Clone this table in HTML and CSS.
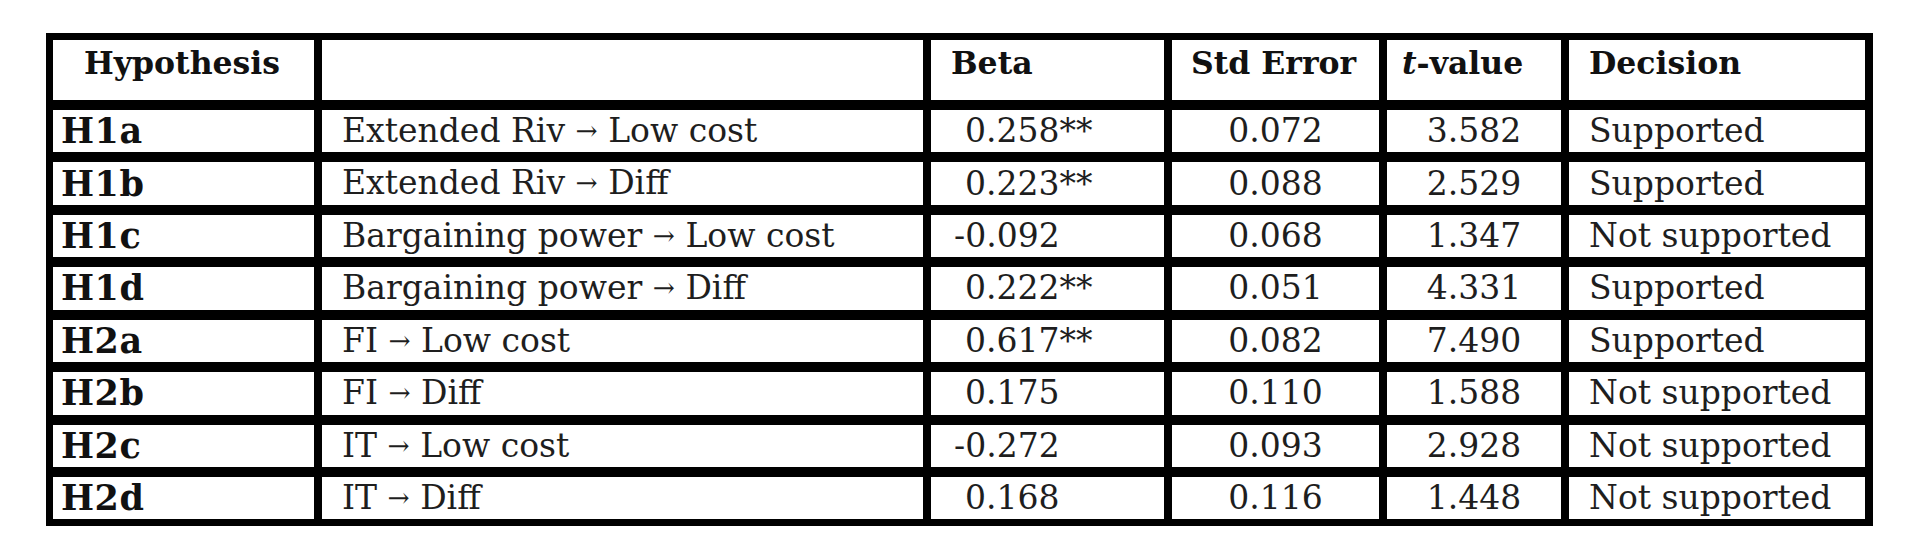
FILE: index.html
```html
<!DOCTYPE html>
<html lang="en">
<head>
<meta charset="utf-8">
<title>Hypothesis testing results</title>
<link rel="stylesheet" href="styles.css">
</head>
<body>
<table class="results">
  <colgroup>
    <col class="c-hyp">
    <col class="c-path">
    <col class="c-beta">
    <col class="c-se">
    <col class="c-t">
    <col class="c-dec">
  </colgroup>
  <thead>
    <tr>
      <th class="hyp-head">Hypothesis</th>
      <th></th>
      <th>Beta</th>
      <th class="se-head">Std Error</th>
      <th class="t-head"><i>t</i>-value</th>
      <th>Decision</th>
    </tr>
  </thead>
  <tbody>
    <tr><td class="hyp">H1a</td><td class="path">Extended Riv <span class="arr">→</span> Low cost</td><td class="beta pos">0.258**</td><td class="num">0.072</td><td class="num">3.582</td><td class="dec">Supported</td></tr>
    <tr><td class="hyp">H1b</td><td class="path">Extended Riv <span class="arr">→</span> Diff</td><td class="beta pos">0.223**</td><td class="num">0.088</td><td class="num">2.529</td><td class="dec">Supported</td></tr>
    <tr><td class="hyp">H1c</td><td class="path">Bargaining power <span class="arr">→</span> Low cost</td><td class="beta">-0.092</td><td class="num">0.068</td><td class="num">1.347</td><td class="dec">Not supported</td></tr>
    <tr><td class="hyp">H1d</td><td class="path">Bargaining power <span class="arr">→</span> Diff</td><td class="beta pos">0.222**</td><td class="num">0.051</td><td class="num">4.331</td><td class="dec">Supported</td></tr>
    <tr><td class="hyp">H2a</td><td class="path">FI <span class="arr">→</span> Low cost</td><td class="beta pos">0.617**</td><td class="num">0.082</td><td class="num">7.490</td><td class="dec">Supported</td></tr>
    <tr><td class="hyp">H2b</td><td class="path">FI <span class="arr">→</span> Diff</td><td class="beta pos">0.175</td><td class="num">0.110</td><td class="num">1.588</td><td class="dec">Not supported</td></tr>
    <tr><td class="hyp">H2c</td><td class="path">IT <span class="arr">→</span> Low cost</td><td class="beta">-0.272</td><td class="num">0.093</td><td class="num">2.928</td><td class="dec">Not supported</td></tr>
    <tr><td class="hyp">H2d</td><td class="path">IT <span class="arr">→</span> Diff</td><td class="beta pos">0.168</td><td class="num">0.116</td><td class="num">1.448</td><td class="dec">Not supported</td></tr>
  </tbody>
</table>
</body>
</html>
```
FILE: styles.css
```css
html, body {
  margin: 0;
  background: #ffffff;
}
body {
  padding: 33px 0 0 46px;
  height: 548px;
  box-sizing: border-box;
  overflow: hidden;
  font-family: "DejaVu Serif", "Liberation Serif", serif;
  font-size: 33px;
  color: #1e1e1e;
}
.results {
  table-layout: fixed;
  border-collapse: separate;
  border-spacing: 0;
  width: 1827px;
  border-style: solid;
  border-color: #000;
  border-width: 7px 8px 7px 7px;
}
.c-hyp { width: 269px; }
.c-path { width: 609px; }
.c-beta { width: 241px; }
.c-se { width: 215px; }
.c-t { width: 182px; }
.c-dec { width: 296px; }

.results th,
.results td {
  border-right: 8px solid #000;
  border-bottom: 10px solid #000;
  padding: 0;
  line-height: 42px;
  white-space: nowrap;
  text-align: left;
}
.results th:last-child,
.results td:last-child {
  border-right: none;
}
.results tbody tr:last-child td {
  border-bottom: none;
}
.results th {
  font-size: 31.5px;
  font-weight: bold;
  color: #111;
  vertical-align: top;
  padding: 2px 0 16px 20px;
}
.results th.hyp-head { padding-left: 31px; }
.results th.se-head { padding-left: 19px; }
.results th.t-head { padding-left: 15px; }

.results td {
  vertical-align: middle;
}

.hyp {
  font-size: 35px;
  font-weight: bold;
  color: #111;
  letter-spacing: 0.5px;
  padding-left: 8px !important;
}
.path { padding-left: 20px !important; }
.arr {
  font-size: 0.8em;
  vertical-align: 0.06em;
}
.beta { padding-left: 23px !important; }
.beta.pos { padding-left: 34px !important; }
.num { text-align: center !important; }
.dec { padding-left: 20px !important; }
```
